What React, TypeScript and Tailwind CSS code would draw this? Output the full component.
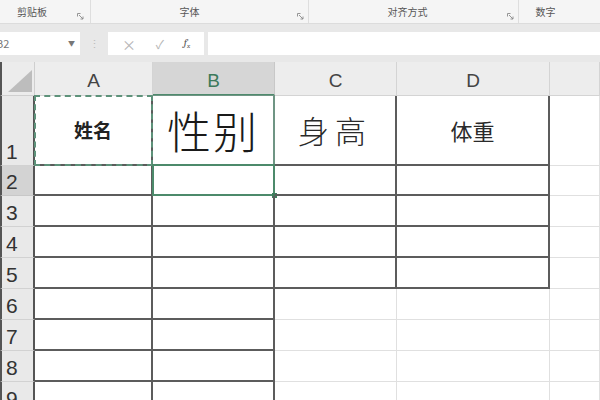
import React from 'react';

const ROWS = [1, 2, 3, 4, 5, 6, 7, 8, 9];
const COLS = ['A', 'B', 'C', 'D', 'E'];

const cellText: Record<string, React.ReactNode> = {
  A1: <span className="text-[19px] font-bold text-[#222]">姓名</span>,
  B1: <span className="text-[44px] font-light leading-none tracking-[2px] text-[#1a1a1a]">性别</span>,
  C1: <span className="text-[31px] font-light tracking-[6px] text-[#2a2a2a]">身高</span>,
  D1: <span className="text-[22px] font-normal text-[#2a2a2a]">体重</span>,
};

const Launcher = () => (
  <svg width="7" height="7" viewBox="0 0 7 7" className="text-[#8a8a8a]">
    <path d="M0.5 0.5h3M0.5 0.5v3M2 2l4 4M6 3.5V6H3.5" stroke="currentColor" strokeWidth="0.9" fill="none" />
  </svg>
);

const Ribbon = () => (
  <div className="flex h-[24px] bg-[#f5f5f5] border-b border-[#dcdcdc] text-[10px] text-[#555]">
    <div className="relative flex w-[91px] items-end justify-center border-r border-[#dedede] pb-[4px]">
      <span className="-ml-[26px]">剪贴板</span>
      <span className="absolute right-[6px] bottom-[3px]"><Launcher /></span>
    </div>
    <div className="relative flex w-[218px] items-end justify-center border-r border-[#dedede] pb-[4px]">
      <span className="-ml-[20px]">字体</span>
      <span className="absolute right-[4px] bottom-[3px]"><Launcher /></span>
    </div>
    <div className="relative flex w-[210px] items-end justify-center border-r border-[#dedede] pb-[4px]">
      <span className="-ml-[12px]">对齐方式</span>
      <span className="absolute right-[4px] bottom-[3px]"><Launcher /></span>
    </div>
    <div className="flex flex-1 items-end justify-center pb-[4px]">
      <span className="-ml-[28px]">数字</span>
    </div>
  </div>
);

const FormulaBar = () => (
  <div className="flex h-[38px] items-center bg-[#e8e8e8] pt-[1px]">
    <div className="flex h-[23px] w-[80px] items-center justify-between bg-white pr-[5px] text-[11px] text-[#777]">
      <span className="-ml-[4px]">B2</span>
      <span className="text-[7px] text-[#777]">▼</span>
    </div>
    <div className="flex w-[28px] justify-center text-[11px] text-[#bbb]">⋮</div>
    <div className="flex h-[23px] w-[96px] items-center justify-around bg-white px-[4px] text-[#b5b5b5]">
      <span className="text-[14px] leading-none">×</span>
      <span className="text-[12px] leading-none">✓</span>
      <span className="font-serif text-[11px] italic text-[#555]">f<sub className="text-[7px]">x</sub></span>
    </div>
    <div className="ml-[4px] h-[23px] flex-1 bg-white" />
  </div>
);

const Sheet = () => (
  <div className="grid grid-cols-[35px_118px_122px_122px_153px_1fr] grid-rows-[34px_70px_30px_31px_31px_31px_31px_31px_31px_31px] bg-white font-['Liberation_Sans','Noto_Sans_CJK_SC',sans-serif]">
    {/* corner */}
    <div className="relative border-r border-b border-[#cfcfcf] bg-[#ececec] border-l-2 border-l-[#555]">
      <div className="absolute right-[2px] bottom-[3px] h-0 w-0 border-b-[22px] border-l-[24px] border-b-[#bdbdbd] border-l-transparent" />
    </div>
    {COLS.map(c =>
      c === 'B' ? (
        <div key={c} className="flex items-center justify-center border-r border-b-2 border-r-[#c8c8c8] border-b-[#4f8a6d] bg-[#d6d6d6] pt-[6px] text-[19px] text-[#3d7a5b]">
          {c}
        </div>
      ) : (
        <div key={c} className="flex items-center justify-center border-r border-b border-[#d4d4d4] bg-[#ededed] pt-[6px] text-[19px] text-[#444]">
          {c === 'E' ? '' : c}
        </div>
      )
    )}
    {ROWS.map(r => (
      <React.Fragment key={r}>
        <div
          className={
            r === 2
              ? 'flex items-end border-r-2 border-b border-r-[#555] border-b-[#c8c8c8] border-l-2 border-l-[#555] bg-[#d3d3d3] pl-[4px] text-[21px] leading-[27px] text-[#333]'
              : 'flex items-end border-r-2 border-b border-r-[#555] border-b-[#d2d2d2] border-l-2 border-l-[#555] bg-[#e9e9e9] pl-[4px] text-[21px] leading-[27px] text-[#333]'
          }
        >
          {r}
        </div>
        {COLS.map((c, ci) => {
          const id = `${c}${r}`;
          const dark = ci <= 1 || (r <= 5 && ci <= 3);
          return (
            <div
              key={id}
              className={
                dark
                  ? 'relative flex items-center justify-center border-r-2 border-b-2 border-[#5c5c5c] font-["Noto_Sans_CJK_SC",sans-serif]'
                  : 'relative flex items-center justify-center border-r border-b border-[#e0e0e0]'
              }
            >
              {cellText[id]}
              {id === 'A1' && (
                <div className="absolute -top-[1px] -left-[1px] -right-[2px] -bottom-[2px] border-2 border-dashed border-[#5e927a]" />
              )}
              {id === 'B1' && (
                <div className="absolute -top-[1px] -left-[1px] -right-[2px] -bottom-[2px] border-r-2 border-t border-[#6f9584]" />
              )}
              {id === 'B2' && (
                <>
                  <div className="absolute -top-[2px] -left-[1px] -right-[2px] -bottom-[2px] border-2 border-[#4c8a6b]" />
                  <div className="absolute -right-[4px] -bottom-[4px] h-[5px] w-[5px] bg-[#3f7d5e]" />
                </>
              )}
            </div>
          );
        })}
      </React.Fragment>
    ))}
  </div>
);

export default function App() {
  return (
    <div className="h-[400px] w-[600px] overflow-hidden bg-white font-['Noto_Sans_CJK_SC',sans-serif]">
      <Ribbon />
      <FormulaBar />
      <Sheet />
    </div>
  );
}
